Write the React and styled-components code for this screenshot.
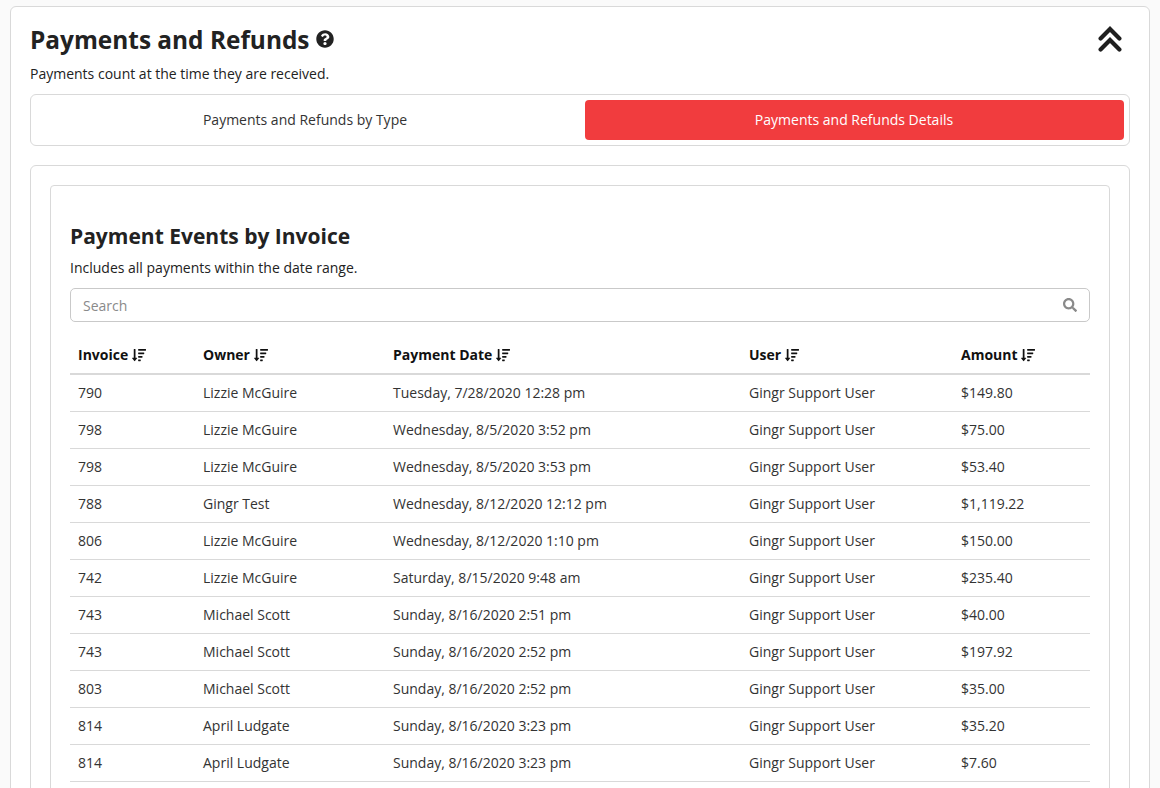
import React from 'react';
import styled, { createGlobalStyle } from 'styled-components';
import { FaQuestionCircle, FaSortAmountDown, FaSearch } from 'react-icons/fa';

const columns = ['Invoice', 'Owner', 'Payment Date', 'User', 'Amount'];

const payments = [
  ['790', 'Lizzie McGuire', 'Tuesday, 7/28/2020 12:28 pm', '$149.80'],
  ['798', 'Lizzie McGuire', 'Wednesday, 8/5/2020 3:52 pm', '$75.00'],
  ['798', 'Lizzie McGuire', 'Wednesday, 8/5/2020 3:53 pm', '$53.40'],
  ['788', 'Gingr Test', 'Wednesday, 8/12/2020 12:12 pm', '$1,119.22'],
  ['806', 'Lizzie McGuire', 'Wednesday, 8/12/2020 1:10 pm', '$150.00'],
  ['742', 'Lizzie McGuire', 'Saturday, 8/15/2020 9:48 am', '$235.40'],
  ['743', 'Michael Scott', 'Sunday, 8/16/2020 2:51 pm', '$40.00'],
  ['743', 'Michael Scott', 'Sunday, 8/16/2020 2:52 pm', '$197.92'],
  ['803', 'Michael Scott', 'Sunday, 8/16/2020 2:52 pm', '$35.00'],
  ['814', 'April Ludgate', 'Sunday, 8/16/2020 3:23 pm', '$35.20'],
  ['814', 'April Ludgate', 'Sunday, 8/16/2020 3:23 pm', '$7.60'],
];

function App() {
  return (
    <Page>
      <GlobalStyle />
      <Card>
        <Header>
          <Title>
            Payments and Refunds <FaQuestionCircle size={18} />
          </Title>
          <Collapse width="24" height="26" viewBox="0 0 24 26">
            <path d="M2.6 12.4 L12 3 L21.4 12.4 M2.6 23.4 L12 14 L21.4 23.4" />
          </Collapse>
        </Header>
        <Note>Payments count at the time they are received.</Note>
        <Tabs>
          <Tab>Payments and Refunds by Type</Tab>
          <Tab $active>Payments and Refunds Details</Tab>
        </Tabs>
        <Outer>
          <Inner>
            <Subtitle>Payment Events by Invoice</Subtitle>
            <SubNote>Includes all payments within the date range.</SubNote>
            <SearchBar>
              <SearchInput placeholder="Search" />
              <FaSearch size={14} color="#8a8a8a" />
            </SearchBar>
            <Table>
              <thead>
                <tr>
                  {columns.map((name) => (
                    <Head key={name}>
                      {name} <FaSortAmountDown size={14} />
                    </Head>
                  ))}
                </tr>
              </thead>
              <tbody>
                {payments.map((p, i) => (
                  <tr key={i}>
                    <Cell>{p[0]}</Cell>
                    <Cell>{p[1]}</Cell>
                    <Cell>{p[2]}</Cell>
                    <Cell>Gingr Support User</Cell>
                    <Cell>{p[3]}</Cell>
                  </tr>
                ))}
              </tbody>
            </Table>
          </Inner>
        </Outer>
      </Card>
    </Page>
  );
}

export default App;

const GlobalStyle = createGlobalStyle`
  html, body {
    margin: 0;
    height: 788px;
    overflow: hidden;
    background-color: #fafafa;
    font-family: "Open Sans", "Liberation Sans", sans-serif;
    color: #222;
  }
`;

const Page = styled.main`
  height: 788px;
  overflow: hidden;
  padding: 6px 10px 0;
  box-sizing: border-box;
`;

const Card = styled.section`
  min-height: 900px;
  box-sizing: border-box;
  padding: 13px 19px 20px;
  background-color: #fff;
  border: 1px solid #d9d9d9;
  border-radius: 6px;
`;

const Header = styled.header`
  display: flex;
  align-items: center;
  justify-content: space-between;
  height: 38px;
`;

const Title = styled.h1`
  margin: 0;
  font-size: 24.4px;
  font-weight: 700;
  color: #222;
  display: flex;
  align-items: center;
  gap: 7px;
`;

const Collapse = styled.svg`
  margin-right: 8px;
  fill: none;
  stroke: #1f1f1f;
  stroke-width: 4.2;
  stroke-linecap: round;
  stroke-linejoin: miter;
`;

const Note = styled.p`
  margin: 6px 0 0;
  font-size: 14px;
  line-height: 20px;
`;

const Tabs = styled.div`
  display: grid;
  grid-template-columns: 1fr 1fr;
  gap: 10px;
  height: 52px;
  box-sizing: border-box;
  margin-top: 10px;
  padding: 5px;
  border: 1px solid #d9d9d9;
  border-radius: 6px;
`;

const Tab = styled.div`
  display: flex;
  align-items: center;
  justify-content: center;
  padding: 0 1px 2px 0;
  font-size: 14px;
  border-radius: 4px;
  color: ${(p) => (p.$active ? '#fff' : '#333')};
  background-color: ${(p) => (p.$active ? '#f13c3e' : 'transparent')};
`;

const Outer = styled.div`
  margin-top: 19px;
  padding: 19px;
  border: 1px solid #d9d9d9;
  border-radius: 6px;
`;

const Inner = styled.div`
  padding: 35px 19px 19px;
  border: 1px solid #d9d9d9;
  border-radius: 4px;
`;

const Subtitle = styled.h2`
  margin: 0;
  font-size: 21px;
  line-height: 30px;
  font-weight: 700;
  color: #222;
`;

const SubNote = styled.p`
  margin: 8px 0 0;
  font-size: 14px;
  line-height: 18px;
`;

const SearchBar = styled.div`
  display: flex;
  align-items: center;
  height: 34px;
  box-sizing: border-box;
  margin-top: 11px;
  padding: 0 12px 0 12px;
  border: 1px solid #c9c9c9;
  border-radius: 5px;
`;

const SearchInput = styled.input`
  flex: 1;
  border: none;
  outline: none;
  padding: 1px 0 0;
  font-family: inherit;
  font-size: 14px;
  color: #333;

  &::placeholder {
    color: #8a8a8a;
    opacity: 1;
  }
`;

const Table = styled.table`
  width: 100%;
  margin-top: 14px;
  border-collapse: collapse;
  table-layout: fixed;
  font-size: 14px;

  th:nth-child(1) { width: 125px; }
  th:nth-child(2) { width: 190px; }
  th:nth-child(3) { width: 356px; }
  th:nth-child(4) { width: 212px; }
`;

const Head = styled.th`
  box-sizing: border-box;
  height: 38px;
  padding: 0 8px 1px;
  text-align: left;
  font-weight: 700;
  color: #111;
  border-bottom: 2px solid #d9d9d9;

  svg {
    vertical-align: -2px;
  }
`;

const Cell = styled.td`
  height: 34px;
  padding: 0 8px 2px;
  color: #333;
  border-bottom: 1px solid #d9d9d9;
`;
